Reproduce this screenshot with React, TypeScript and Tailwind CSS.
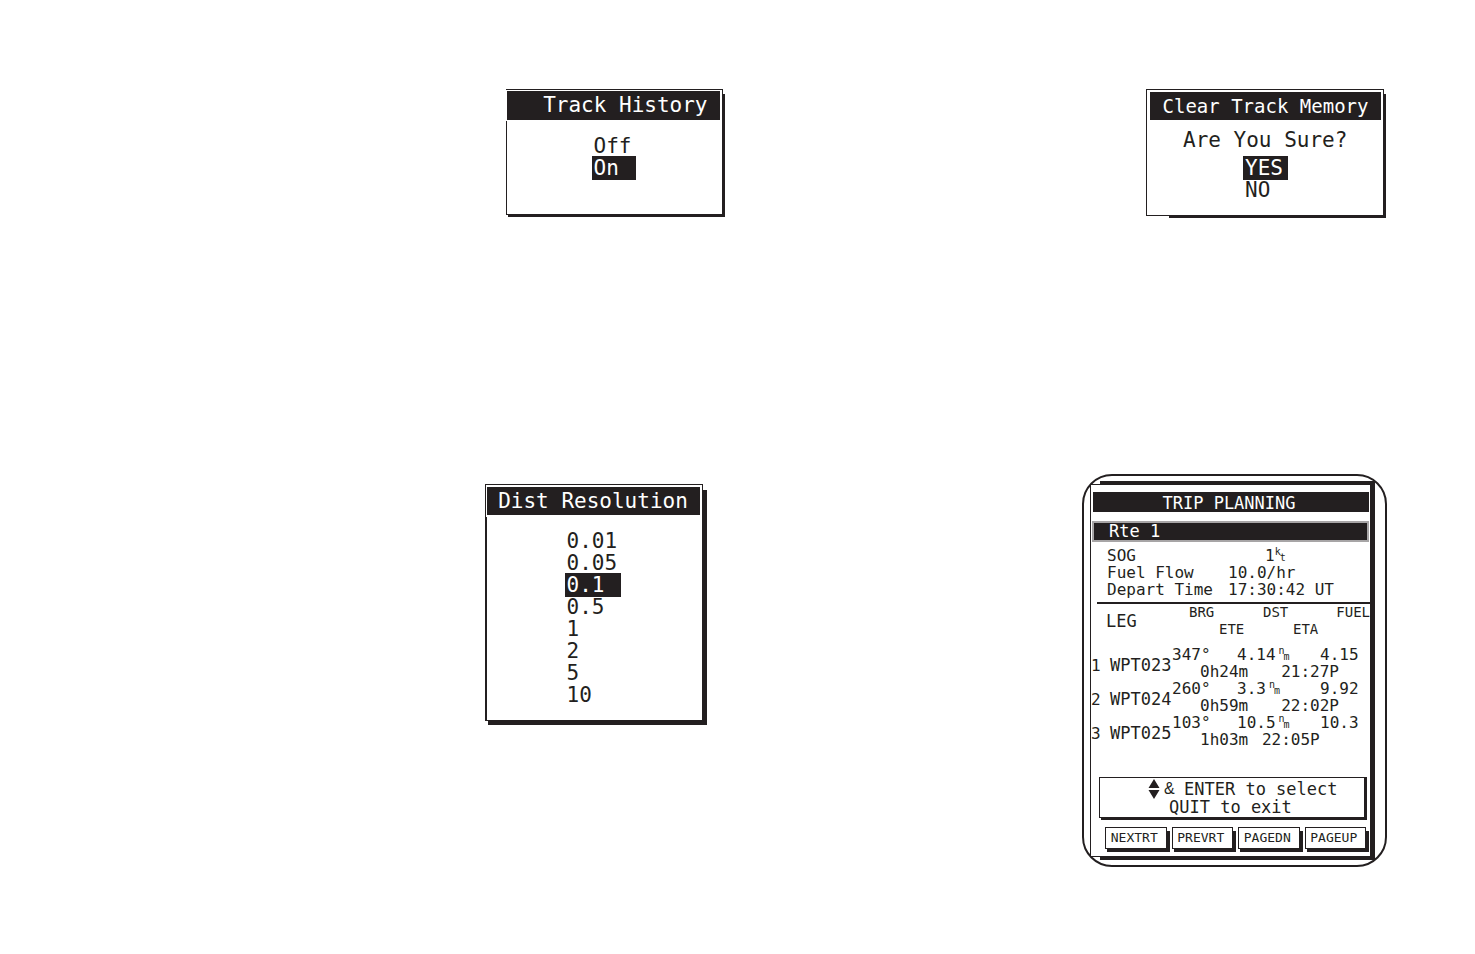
import React, { useState } from 'react';
import { clsx } from 'clsx';

interface Leg {
  readonly name: string;
  readonly bearing: string;
  readonly distance: string;
  readonly fuel: string;
  readonly ete: string;
  readonly eta: string;
}

const LEGS: readonly Leg[] = [
  { name: 'WPT023', bearing: '347°', distance: '4.14', fuel: '4.15', ete: '0h24m', eta: '21:27P' },
  { name: 'WPT024', bearing: '260°', distance: '3.3', fuel: '9.92', ete: '0h59m', eta: '22:02P' },
  // this ETA ends two characters early
  { name: 'WPT025', bearing: '103°', distance: '10.5', fuel: '10.3', ete: '1h03m', eta: '22:05P  ' },
];

const SOFT_KEYS = ['NEXTRT', 'PREVRT', 'PAGEDN', 'PAGEUP'];

// The shadow and the face share one grid cell, each with its own margins.
const Raised: React.FC<{
  readonly shadow: string;
  readonly face: string;
  readonly className?: string;
  readonly children: React.ReactNode;
}> = ({ shadow, face, className, children }) => (
  <div className={clsx('grid', className)}>
    <div className={clsx('col-start-1 row-start-1 bg-[#231f20]', shadow)} />
    <div className={clsx('col-start-1 row-start-1 bg-white border-[#231f20]', face)}>
      {children}
    </div>
  </div>
);

const OptionList: React.FC<{
  readonly label: string;
  readonly options: readonly string[];
  readonly initial: string;
  readonly className: string;
}> = ({ label, options, initial, className }) => {
  const [selected, setSelected] = useState(initial);

  return (
    <ul aria-label={label} className={clsx('text-[21px] leading-[22px]', className)}>
      {options.map((option) => (
        <li key={option}>
          <button
            type="button"
            aria-pressed={option === selected}
            onClick={() => setSelected(option)}
            className={clsx(
              'block w-full text-left pl-0.5',
              option === selected && 'bg-[#231f20] text-white py-px -my-px',
            )}
          >
            {option}
          </button>
        </li>
      ))}
    </ul>
  );
};

const Unit: React.FC<{ readonly top: string; readonly bottom: string }> = ({ top, bottom }) => (
  <span className="inline-flex text-[10px] leading-[10px]">
    <span>{top}</span>
    <span className="-ml-px pt-[6px]">{bottom}</span>
  </span>
);

const LegTable: React.FC = () => (
  <table className="w-full table-fixed text-[16px] leading-[17px]">
    <colgroup>
      <col className="w-[19px]" />
      <col className="w-[62px]" />
      <col className="w-[28px]" />
      <col className="w-[37px]" />
      <col className="w-[23px]" />
      <col className="w-[60px]" />
      <col />
    </colgroup>
    <thead className="text-[14px] text-left">
      <tr className="h-[17px]">
        <th rowSpan={2} colSpan={2} className="pl-[15px] text-[17px] font-normal">
          LEG
        </th>
        <th colSpan={2} className="pl-[17px] font-normal">BRG</th>
        <th colSpan={2} className="pl-[26px] font-normal">DST</th>
        <th className="text-right font-normal">FUEL</th>
      </tr>
      <tr className="h-[17px]">
        <th />
        <th colSpan={2} className="pl-[19px] font-normal">ETE</th>
        <th colSpan={2} className="pl-[33px] font-normal">ETA</th>
      </tr>
      <tr className="h-2" />
    </thead>
    <tbody>
      {LEGS.map((leg, i) => (
        <React.Fragment key={leg.name}>
          <tr className="h-[17px]">
            <td rowSpan={2} className="pt-1">{i + 1}</td>
            <td rowSpan={2} className="pt-1 text-[17px]">{leg.name}</td>
            <td colSpan={2}>{leg.bearing}</td>
            <td colSpan={2}>
              <span className="flex gap-[3px]">
                {leg.distance}
                <Unit top="n" bottom="m" />
              </span>
            </td>
            <td className="pr-3 text-right">{leg.fuel}</td>
          </tr>
          <tr className="h-[17px]">
            <td />
            <td colSpan={2}>{leg.ete}</td>
            <td colSpan={2} className="pr-[31px] text-right whitespace-pre">{leg.eta}</td>
          </tr>
        </React.Fragment>
      ))}
    </tbody>
  </table>
);

const TripPlanning: React.FC = () => (
  <section className="w-[305px] pl-1.5 pr-2.5 py-[5px] border-2 border-[#231f20] rounded-[30px]">
    <Raised shadow="ml-2.5" face="mt-[3px] mr-[5px] mb-[3px] border-l border-t border-b">
      <h2 className="mt-[7px] ml-0.5 mr-px h-5 pr-1 bg-[#231f20] text-white text-center text-[17px] leading-[22px]">
        TRIP PLANNING
      </h2>
      <div className="mt-[9px] ml-px mr-px">
        <button
          type="button"
          className="block w-full h-[21px] pl-[15px] border-2 border-[#a7a5a6] bg-[#231f20] text-white text-left text-[17px] leading-[17px]"
        >
          Rte 1
        </button>
      </div>
      <dl className="mt-[5px] mb-1 ml-4 grid grid-cols-[121px_1fr] text-[16px] leading-[17px]">
        <dt>SOG</dt>
        <dd className="flex pl-[37px]">
          1<Unit top="k" bottom="t" />
        </dd>
        <dt>Fuel Flow</dt>
        <dd>10.0/hr</dd>
        <dt>Depart Time</dt>
        <dd>17:30:42 UT</dd>
      </dl>
      <hr className="ml-1.5 border-t-2 border-[#231f20]" />
      <LegTable />
      <Raised
        className="mt-[29px] ml-2 mr-[3px]"
        shadow="ml-0.5"
        face="mr-0.5 mb-0.5 h-[41px] border pt-0.5 text-[17px] leading-[18px]"
      >
        <p className="flex items-center pl-12">
          <svg viewBox="0 0 12 20" className="w-3 h-5 -my-px fill-[#231f20]" aria-hidden="true">
            <path d="M6 0 11.5 9H.5ZM6 20 .5 11H11.5Z" />
          </svg>
          <span className="w-[24px] pl-1 font-['Liberation_Sans',sans-serif] text-[16px]">&amp;</span>
          <span>ENTER to select</span>
        </p>
        <p className="pl-[69px]">QUIT to exit</p>
      </Raised>
      <div className="mt-[7px] ml-3.5 mr-px mb-1 grid grid-cols-4 gap-0.5">
        {SOFT_KEYS.map((key) => (
          <Raised key={key} shadow="ml-0.5 mt-1" face="mr-[3px] mb-[3px] border">
            <button
              type="button"
              className="block w-full h-5 pr-[3px] text-center text-[13px] leading-[18px]"
            >
              {key}
            </button>
          </Raised>
        ))}
      </div>
    </Raised>
  </section>
);

export default function App() {
  return (
    <main className="min-h-screen bg-white pt-[89px] pb-[88px] grid grid-cols-2 items-start font-['DejaVu_Sans_Mono',monospace] text-[#231f20]">
      <div className="flex flex-col items-end gap-[267px] pr-[13px]">
        <Raised
          className="w-[219px]"
          shadow="ml-0.5 mt-[5px]"
          face="mr-0.5 mb-0.5 border-t border-r border-b"
        >
          <h2 className="mt-px ml-px mr-0.5 mb-px h-[29px] pr-3 bg-[#231f20] text-white text-right text-[21px] leading-[28px]">
            Track History
          </h2>
          <div className="h-[93px] border-l border-[#231f20] pt-[14px]">
            <OptionList
              label="Track History"
              options={['Off', 'On']}
              initial="On"
              className="ml-[85px] w-11"
            />
          </div>
        </Raised>

        <Raised
          className="w-[222px] mr-[18px]"
          shadow="ml-[3px] mt-1.5"
          face="mr-1 mb-1 border-t border-r border-b border-l"
        >
          <h2 className="my-0.5 ml-px mr-0.5 h-7 bg-[#231f20] text-white text-center text-[21px] leading-[28px]">
            Dist Resolution
          </h2>
          <div className="h-[203px] border-l border-[#231f20] pt-[13px]">
            <OptionList
              label="Dist Resolution"
              options={['0.01', '0.05', '0.1', '0.5', '1', '2', '5', '10']}
              initial="0.1"
              className="ml-[78px] w-14"
            />
          </div>
        </Raised>
      </div>

      <div className="flex flex-col items-end gap-[256px] pr-[88px]">
        <Raised className="w-[240px] mr-px" shadow="ml-[23px] mt-[5px]" face="mr-0.5 mb-0.5 border">
          <h2 className="mt-0.5 ml-[3px] mr-0.5 h-7 bg-[#231f20] text-white text-center text-[19px] leading-[28px]">
            Clear Track Memory
          </h2>
          <div className="h-[95px] pt-[10px]">
            <p className="pl-9 text-[21px] leading-[20px]">Are You Sure?</p>
            <OptionList
              label="Are You Sure?"
              options={['YES', 'NO']}
              initial="YES"
              className="mt-[7px] ml-24 w-[45px]"
            />
          </div>
        </Raised>

        <TripPlanning />
      </div>
    </main>
  );
}
